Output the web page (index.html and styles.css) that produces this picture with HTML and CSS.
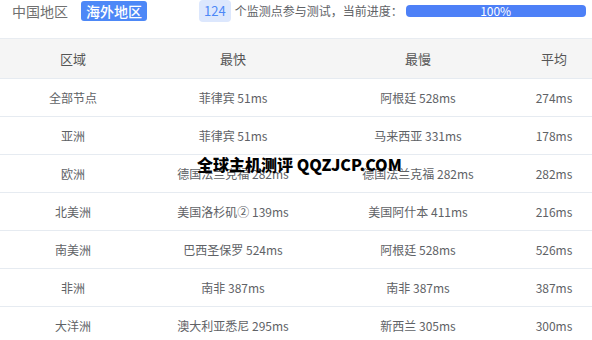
FILE: index.html
```html
<!DOCTYPE html>
<html>
<head>
<meta charset="utf-8">
<link rel="stylesheet" href="styles.css">
</head>
<body>
<div class="page">
  <div class="topbar">
    <span class="tab">中国地区</span>
    <span class="tab active">海外地区</span>
    <span class="count">124</span>
    <span class="desc">个监测点参与测试，当前进度：</span>
    <div class="progress"><span>100%</span></div>
  </div>
  <div class="table">
    <div class="row head">
      <div>区域</div><div>最快</div><div>最慢</div><div>平均</div>
    </div>
    <div class="row"><div>全部节点</div><div>菲律宾 51ms</div><div>阿根廷 528ms</div><div>274ms</div></div>
    <div class="row"><div>亚洲</div><div>菲律宾 51ms</div><div>马来西亚 331ms</div><div>178ms</div></div>
    <div class="row"><div>欧洲</div><div>德国法兰克福 282ms</div><div>德国法兰克福 282ms</div><div>282ms</div></div>
    <div class="row"><div>北美洲</div><div>美国洛杉矶② 139ms</div><div>美国阿什本 411ms</div><div>216ms</div></div>
    <div class="row"><div>南美洲</div><div>巴西圣保罗 524ms</div><div>阿根廷 528ms</div><div>526ms</div></div>
    <div class="row"><div>非洲</div><div>南非 387ms</div><div>南非 387ms</div><div>387ms</div></div>
    <div class="row"><div>大洋洲</div><div>澳大利亚悉尼 295ms</div><div>新西兰 305ms</div><div>300ms</div></div>
  </div>
  <div class="watermark">全球主机测评 QQZJCP.COM</div>
</div>
</body>
</html>
```
FILE: styles.css
```css
* { box-sizing: border-box; }
html, body { margin: 0; padding: 0; background: #fff; }
body {
  font-family: "Microsoft YaHei", "Noto Sans CJK SC", "Noto Sans", sans-serif;
  color: #606266;
  overflow: hidden;
  width: 592px;
  height: 340px;
}
.page { position: relative; }
.topbar {
  height: 39px;
  display: flex;
  align-items: flex-start;
  padding-left: 12px;
  border-bottom: 1px solid #e8ecf1;
  white-space: nowrap;
}
.topbar > * { flex-shrink: 0; }
.tab {
  font-size: 14px;
  color: #707070;
  line-height: 22px;
  margin-top: 0;
}
.tab.active {
  margin-left: 13px;
  margin-top: 1px;
  background: #4d88f7;
  color: #fff;
  padding: 0 5px;
  border-radius: 3px;
  line-height: 20px;
  font-weight: 500;
}
.count {
  margin-left: 52px;
  background: #dce7fd;
  color: #4d88f7;
  border-radius: 4px;
  padding: 0 5px;
  line-height: 22px;
  font-size: 13px;
}
.desc {
  margin-left: 4px;
  line-height: 22px;
  font-size: 12px;
  color: #606266;
}
.progress {
  margin-left: 3px;
  margin-top: 5px;
  width: 180px;
  height: 12px;
  border-radius: 4px;
  background: #4d80f7;
  color: #fff;
  font-size: 12px;
  line-height: 12px;
  text-align: center;
}
.table { font-size: 12px; }
.row {
  display: grid;
  grid-template-columns: 146px 174px 196px 76px;
  height: 38px;
  align-items: center;
  text-align: center;
  white-space: nowrap;
  border-bottom: 1px solid #e6ebf1;
}
.row.head {
  height: 40px;
  background: #f5f5f5;
  font-size: 13px;
  color: #555;
  border-bottom: 1px solid #e6ebf1;
}
.watermark {
  position: absolute;
  left: 197px;
  top: 154px;
  font-family: "Microsoft YaHei", "Noto Sans CJK SC", sans-serif;
  font-weight: 900;
  font-size: 16px;
  color: #000;
  line-height: 20px;
  white-space: nowrap;
}
```
